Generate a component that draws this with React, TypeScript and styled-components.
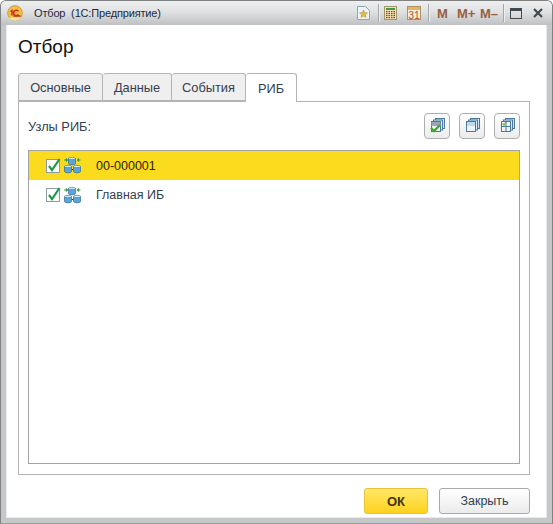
import React from "react";
import styled, { createGlobalStyle } from "styled-components";

const Global = createGlobalStyle`
  html, body { margin: 0; padding: 0; background: #fff; }
  body { font-family: "Liberation Sans", Arial, sans-serif; }
  * { box-sizing: border-box; }
`;

const Win = styled.div`
  width: 553px; height: 524px; display: flex; flex-direction: column;
  background: #c6c7c8; border: 1px solid #7f8183; border-bottom-color: #9a9b9c;
  border-radius: 6px 6px 0 0; overflow: hidden;
`;
const TitleBar = styled.div`
  height: 24px; flex: none; display: flex; align-items: center; padding-left: 6px;
  background: linear-gradient(#eeefef 0%, #e0e1e2 45%, #bfc0c1 100%);
`;
const TitleText = styled.span`
  margin-left: 11px; width: 323px; font-size: 11px; letter-spacing: -0.16px; color: #1c2a3c; white-space: pre; line-height: 24px;
`;
const Sep = styled.i<{ $m: string }>`
  width: 1px; height: 18px; background: #a6a7a8; box-shadow: 1px 0 0 #eee; flex: none;
  margin: ${(p) => p.$m};
`;
const MemoBtn = styled.span<{ $w: number; $ml: number }>`
  width: ${(p) => p.$w}px; margin-left: ${(p) => p.$ml}px; flex: none;
  font: bold 13px "Liberation Sans", Arial, sans-serif; color: #96603e; text-align: center; white-space: nowrap;
`;
const TbIcon = styled.svg<{ $ml?: number }>`
  flex: none; display: block; margin-left: ${(p) => p.$ml ?? 0}px;
`;
const Body = styled.div`
  flex: 1; margin: 0 5px 5px; background: #fff; display: flex; flex-direction: column;
  padding: 0 16px 0 11px; border: 1px solid #e9e9e9; border-top: 0;
`;
const Heading = styled.h1`
  margin: 0; height: 48px; padding-top: 11px; font-size: 19px; font-weight: 400; line-height: 22px; color: #111;
`;
const Tabs = styled.div`
  display: flex; height: 28px; flex: none; position: relative; z-index: 1;
`;
const Tab = styled.div<{ $w: number; $active?: boolean; $first?: boolean }>`
  width: ${(p) => p.$w}px; height: ${(p) => (p.$active ? 29 : 28)}px;
  display: flex; align-items: center; justify-content: center;
  font-size: 12.8px; color: #33404f;
  background: ${(p) => (p.$active ? "#fff" : "#efefef")};
  border: 1px solid #b4b4b4; border-left-width: ${(p) => (p.$first ? 1 : 0)}px;
  border-bottom: ${(p) => (p.$active ? "0" : "1px solid #b4b4b4")};
  border-radius: 3px 3px 0 0;
`;
const Panel = styled.div`
  width: 512px; height: 374px; flex: none; border: 1px solid #b4b4b4;
  padding: 9px 9px 10px 9px; display: flex; flex-direction: column;
`;
const ToolRow = styled.div`
  height: 39px; flex: none; display: flex; align-items: flex-start; justify-content: flex-end; padding-top: 2px; gap: 9px;
`;
const Label = styled.span`
  margin-right: auto; font-size: 12.8px; color: #33404f; line-height: 28px;
`;
const ToolBtn = styled.button`
  width: 26px; height: 26px; padding: 0; border: 1px solid #aeaeae; border-radius: 4px;
  background: linear-gradient(#fff, #ececec); display: flex; align-items: center; justify-content: center;
`;
const Tree = styled.div`
  flex: 1; border: 1px solid #a4a4a4;
`;
const Row = styled.div<{ $sel?: boolean }>`
  height: ${(p) => (p.$sel ? 29 : 30)}px; display: flex; align-items: center; padding-left: 17px;
  background: ${(p) => (p.$sel ? "#fbdb1e" : "#fff")};
`;
const RowText = styled.span<{ $sel?: boolean }>`
  margin-left: 15px; font-size: 12.5px; color: ${(p) => (p.$sel ? "#2a2408" : "#33404f")};
`;
const Footer = styled.div`
  flex: 1; display: flex; justify-content: flex-end; align-items: flex-start; gap: 11px; padding-top: 13px;
`;
const Btn = styled.button<{ $ok?: boolean }>`
  height: 26px; width: ${(p) => (p.$ok ? 64 : 91)}px; padding: 0; border-radius: 3px;
  font: ${(p) => (p.$ok ? "bold 13px" : "12.5px")} "Liberation Sans", Arial, sans-serif;
  color: ${(p) => (p.$ok ? "#3c3510" : "#33404f")};
  border: 1px solid ${(p) => (p.$ok ? "#e8c33a" : "#a9a9a9")};
  background: ${(p) => (p.$ok ? "linear-gradient(#ffe766, #ffd21f)" : "linear-gradient(#fff, #ebebeb)")};
`;

const Logo = () => (
  <TbIcon width="16" height="16" viewBox="0 0 16 16">
    <circle cx="8" cy="8" r="7.300" fill="#f5bf45" stroke="#c99a3c" />
    <path d="M2 12.500 A7.300 7.300 0 0 0 14 12.500Z" fill="#fce9a8" />
    <path d="M3.500 6.500 5 5.500v5M11.500 6.300a2.700 2.700 0 1 0 0 3.200M6.500 11h7" fill="none" stroke="#c4321c" strokeWidth="1.500" />
  </TbIcon>
);
const StarDoc = () => (
  <TbIcon width="13" height="14" viewBox="0 0 13 14">
    <path d="M.5.5h8l4 4v9H.5z" fill="#eef3f8" stroke="#8ea3b8" />
    <path d="M6.500 4l1.200 2.600 2.800.3-2.100 1.900.6 2.800-2.500-1.500L4 11.600l.6-2.800-2.100-1.900 2.800-.3z" fill="#e8b93c" stroke="#a88a3c" strokeWidth=".5" />
  </TbIcon>
);
const Calc = () => (
  <TbIcon width="13" height="14" viewBox="0 0 13 14">
    <rect x=".5" y=".5" width="12" height="13" fill="#f4e2b4" stroke="#a89468" />
    <rect x="2" y="2" width="9" height="2" fill="#3f9a4c" />
    {[5, 7, 9, 11].map((y) => [2, 4.5, 7, 9.5].map((x) => <rect key={`${x}-${y}`} x={x} y={y} width="1.500" height="1.200" fill="#6a4a2a" />))}
  </TbIcon>
);
const Cal = () => (
  <TbIcon $ml={10} width="14" height="14" viewBox="0 0 14 14">
    <rect x=".5" y=".5" width="13" height="13" fill="#fbf3e2" stroke="#a89468" />
    <rect x="1" y="1" width="12" height="3" fill="#e8b060" />
    <text x="7" y="13" textAnchor="middle" fontSize="10.500" fontFamily="Liberation Sans" fill="#c4421c">31</text>
  </TbIcon>
);
const Maxi = () => (
  <TbIcon $ml={6} width="12" height="11" viewBox="0 0 12 11">
    <rect x=".5" y=".5" width="11" height="10" fill="none" stroke="#3f4a52" />
    <rect x="1" y="1" width="10" height="2" fill="#3f4a52" />
  </TbIcon>
);
const CloseX = () => (
  <TbIcon $ml={11} width="10" height="10" viewBox="0 0 10 10">
    <path d="M1 1l8 8M9 1l-8 8" stroke="#3f4a52" strokeWidth="2.200" />
  </TbIcon>
);
const Stack = () => (
  <>
    <rect x="6.500" y=".5" width="9" height="10" fill="#cfe2f0" stroke="#4a7aa0" />
    <rect x="4.500" y="2" width="9" height="10" fill="#dcebf5" stroke="#4a7aa0" />
    <rect x="2.500" y="3.500" width="9" height="10" fill="#eef5fa" stroke="#4a7aa0" />
  </>
);
const CheckAll = () => (
  <svg width="17" height="16" viewBox="0 0 17 16">
    <Stack />
    <rect x="2.500" y="4" width="9" height="4" fill="#9aa6ae" />
    <path d="M2 10l3 3 6-6" fill="none" stroke="#3fa82c" strokeWidth="2.400" />
  </svg>
);
const Uncheck = () => (
  <svg width="17" height="16" viewBox="0 0 17 16">
    <Stack />
    <rect x="3" y="4" width="8" height="4" fill="#bcdcee" />
  </svg>
);
const Partial = () => (
  <svg width="17" height="16" viewBox="0 0 17 16">
    <Stack />
    <path d="M7 3.500v10M2.500 8.500h9" stroke="#4a7aa0" />
    <path d="M3.500 5.500l1.500 1.500 2-3" fill="none" stroke="#7fae2c" strokeWidth="1.200" />
  </svg>
);
const Check = () => (
  <svg width="16" height="16" viewBox="0 0 16 16">
    <rect x=".5" y="1.500" width="13" height="13" fill="#fff" stroke="#8c9aa4" />
    <path d="M3 8l3 4 7.500-11" fill="none" stroke="#1e9a4c" strokeWidth="2.200" />
  </svg>
);
const Cyl = ({ x, y }: { x: number; y: number }) => (
  <g transform={`translate(${x} ${y})`}>
    <path d="M.5 1.500v5a3.500 1.300 0 0 0 7 0v-5z" fill="#5aa6d8" stroke="#2f6a94" strokeWidth=".7" />
    <ellipse cx="4" cy="1.500" rx="3.500" ry="1.200" fill="#d4ecf8" stroke="#2f6a94" strokeWidth=".6" />
  </g>
);
const Nodes = () => (
  <svg width="17" height="17" viewBox="0 0 17 17" style={{ marginLeft: 2 }}>
    <path d="M0 3h3M2 1.500 3.500 3 2 4.500M16.500 3h-3M15 1.500 13.500 3 15 4.500" stroke="#3f9a4c" strokeWidth="1.100" fill="none" />
    <Cyl x={4} y={0} />
    <path d="M7.500 12.500h2" stroke="#333" />
    <Cyl x={0} y={8} />
    <Cyl x={9} y={8} />
  </svg>
);

export default function App() {
  return (
    <>
      <Global />
      <Win>
        <TitleBar>
          <Logo />
          <TitleText>Отбор  (1С:Предприятие)</TitleText>
          <StarDoc />
          <Sep $m="0 5px 0 8px" />
          <Calc />
          <Cal />
          <Sep $m="0 0 0 7px" />
          <MemoBtn $w={10} $ml={8}>M</MemoBtn>
          <MemoBtn $w={17} $ml={10}>M+</MemoBtn>
          <MemoBtn $w={17} $ml={6}>M–</MemoBtn>
          <Sep $m="0 0 0 6px" />
          <Maxi />
          <CloseX />
        </TitleBar>
        <Body>
          <Heading>Отбор</Heading>
          <Tabs>
            <Tab $w={85} $first>Основные</Tab>
            <Tab $w={69}>Данные</Tab>
            <Tab $w={74}>События</Tab>
            <Tab $w={51} $active>РИБ</Tab>
          </Tabs>
          <Panel>
            <ToolRow>
              <Label>Узлы РИБ:</Label>
              <ToolBtn aria-label="check"><CheckAll /></ToolBtn>
              <ToolBtn aria-label="uncheck"><Uncheck /></ToolBtn>
              <ToolBtn aria-label="partial"><Partial /></ToolBtn>
            </ToolRow>
            <Tree>
              <Row $sel><Check /><Nodes /><RowText $sel>00-000001</RowText></Row>
              <Row><Check /><Nodes /><RowText>Главная ИБ</RowText></Row>
            </Tree>
          </Panel>
          <Footer>
            <Btn $ok>ОК</Btn>
            <Btn>Закрыть</Btn>
          </Footer>
        </Body>
      </Win>
    </>
  );
}
